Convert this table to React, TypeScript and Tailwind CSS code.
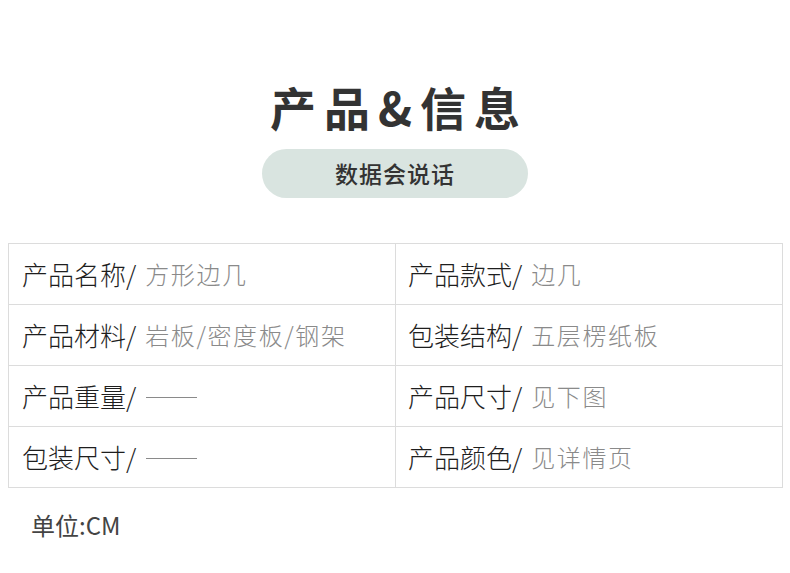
const rows: [string, string, string, string][] = [
  ["产品名称/", "方形边几", "产品款式/", "边几"],
  ["产品材料/", "岩板/密度板/钢架", "包装结构/", "五层楞纸板"],
  ["产品重量/", "", "产品尺寸/", "见下图"],
  ["包装尺寸/", "", "产品颜色/", "见详情页"],
];

function Cell({ label, value, left }: { label: string; value: string; left?: boolean }) {
  return (
    <div
      className={`flex items-center h-[60px] ${left ? "pl-[13px] border-r border-[#dcdcdc]" : "pl-[12px]"}`}
    >
      <span className="text-[26px] font-light text-[#1e1e1e] leading-none">{label}</span>
      {value ? (
        <span className="ml-[9px] text-[24px] font-light text-[#8a8a8a] leading-none tracking-[1.6px]">{value}</span>
      ) : (
        <span className="ml-[10px] mt-[2px] w-[51px] border-t border-[#8a8a8a]" />
      )}
    </div>
  );
}

export default function App() {
  return (
    <div
      className="w-[790px] h-[573px] bg-white overflow-hidden"
      style={{ fontFamily: '"Noto Sans CJK SC", "Noto Sans", sans-serif' }}
    >
      <div className="flex flex-col items-center pt-[83px]">
        <h1 className="text-[46px] font-bold text-[#333] leading-none tracking-[8px] pl-[8px]">
          产品&amp;信息
        </h1>
        <div className="mt-[20px] w-[266px] h-[49px] rounded-full bg-[#d9e4e0] flex items-center justify-center">
          <span className="text-[23px] font-medium text-[#333] leading-none tracking-[1px]">数据会说话</span>
        </div>
      </div>

      <div className="mx-[8px] mt-[45px] w-[775px] border border-[#dcdcdc]">
        {rows.map((r, i) => (
          <div
            key={i}
            className={`grid grid-cols-[387px_1fr] ${i < rows.length - 1 ? "border-b border-[#dcdcdc]" : ""}`}
          >
            <Cell label={r[0]} value={r[1]} left />
            <Cell label={r[2]} value={r[3]} />
          </div>
        ))}
      </div>

      <div className="pl-[31px] mt-[25px] text-[24px] font-normal text-[#444] leading-none">单位:CM</div>
    </div>
  );
}
